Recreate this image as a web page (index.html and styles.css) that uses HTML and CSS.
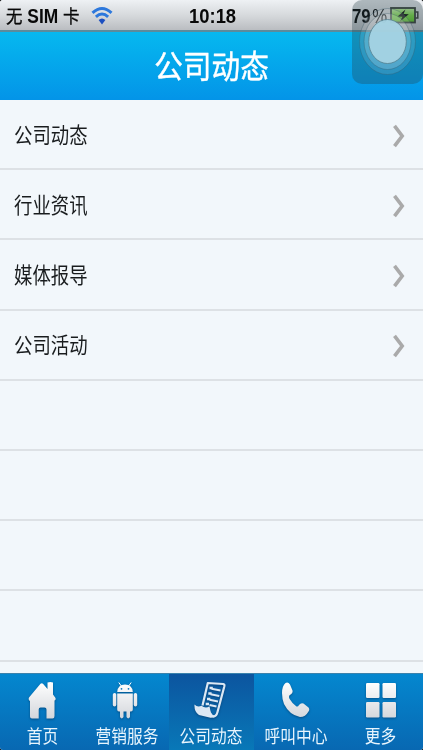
FILE: index.html
```html
<!DOCTYPE html>
<html lang="zh-CN">
<head>
  <meta charset="UTF-8" />
  <meta name="viewport" content="width=device-width, initial-scale=1" />
  <title>公司动态</title>
  <link rel="stylesheet" href="styles.css">
</head>
<body>
  <div class="app">
    <!-- Status bar -->
    <div class="status">
      <div class="carrier">
        <span class="carrier-text"><span class="han">无</span> SIM <span class="han">卡</span></span>
        <svg class="wifi" width="22" height="19" viewBox="0 0 22 19">
          <g fill="none" stroke="#2d78dc" stroke-width="3">
            <path d="M1.500 6.800Q11 -1.800 20.500 6.800" />
            <path d="M4.900 10.800Q11 5.200 17.100 10.800" />
          </g>
          <path d="M7.600 14Q11 11 14.400 14L11 18.500Z" fill="#1c4fc0" />
        </svg>
      </div>
      <span class="clock">10:18</span>
      <div class="power">
        <span class="percent">79<span class="sign">%</span></span>
        <svg class="battery" width="29" height="17" viewBox="0 0 29 17">
          <defs>
            <linearGradient id="charge" x1="0" y1="0" x2="0" y2="1">
              <stop offset="0" stop-color="#c8f5a8" />
              <stop offset="0.5" stop-color="#7fe048" />
              <stop offset="1" stop-color="#5fc42a" />
            </linearGradient>
          </defs>
          <rect x="1" y="1" width="24" height="14.500" fill="url(#charge)" stroke="#3c423c" stroke-width="1.800" />
          <path d="M25.500 5h2.300v6h-2.300" fill="none" stroke="#3c423c" stroke-width="1.500" />
          <path d="M15.500 2.500L7.500 9.500l5 .2L10 14.500l8.800-7.200-5.300-.3Z" fill="#151a12" />
        </svg>
      </div>
    </div>

    <header class="header">
      <h1>公司动态</h1>
    </header>

    <ul class="list">
      <li><span class="name">公司动态</span><svg class="arrow" width="12" height="24" viewBox="0 0 12 24"><path d="M1.500 1.800L9.200 12L1.500 22.200" /></svg></li>
      <li><span class="name">行业资讯</span><svg class="arrow" width="12" height="24" viewBox="0 0 12 24"><path d="M1.500 1.800L9.200 12L1.500 22.200" /></svg></li>
      <li><span class="name">媒体报导</span><svg class="arrow" width="12" height="24" viewBox="0 0 12 24"><path d="M1.500 1.800L9.200 12L1.500 22.200" /></svg></li>
      <li><span class="name">公司活动</span><svg class="arrow" width="12" height="24" viewBox="0 0 12 24"><path d="M1.500 1.800L9.200 12L1.500 22.200" /></svg></li>
      <li></li>
      <li></li>
      <li></li>
      <li></li>
    </ul>

    <!-- Bottom tabs -->
    <nav class="tabs">
      <a class="tab">
        <svg class="icon" width="40" height="42" viewBox="0 0 40 42">
          <defs>
            <linearGradient id="silver" gradientUnits="userSpaceOnUse" x1="0" y1="2" x2="0" y2="40">
              <stop offset="0" stop-color="#ffffff" />
              <stop offset="1" stop-color="#d2d5da" />
            </linearGradient>
          </defs>
          <path fill="url(#silver)" d="M18.500 3.800Q19.800 2.500 21 3.800L25.500 9V2.500Q28.500 1.500 31 2.500V14.500L33.500 18Q34 20 32.500 20.500V36Q32.500 38.500 30.500 38.500H24.500V29.500Q24.500 27.500 22.500 27.500H18.500Q16.700 27.500 16.700 29.500V38.500H10Q8 38.500 8 36.500V21Q6 20 7 17.500Z" />
        </svg>
        <span class="label">首页</span>
      </a>
      <a class="tab">
        <svg class="icon" width="40" height="42" viewBox="0 0 40 42">
          <path d="M11.800 2.500L15 7M24.200 2.500L21 7" stroke="#fff" stroke-width="1" />
          <path fill="url(#silver)" d="M10.200 12Q10.700 4.500 18 4.500T25.800 12Z" />
          <path fill="url(#silver)" d="M10.200 13.500H25.800V29.500Q25.800 31.500 24 31.500H23V37Q21.200 39.800 19.500 37V31.500H16.500V37Q14.700 39.800 13 37V31.500H12Q10.200 31.500 10.200 29.500Z" />
          <rect fill="url(#silver)" x="5.800" y="13" width="3.500" height="13.500" rx="1.700" />
          <rect fill="url(#silver)" x="26.700" y="13" width="3.500" height="13.500" rx="1.700" />
          <circle cx="14.500" cy="8.800" r="0.900" fill="#0876bd" />
          <circle cx="21.500" cy="8.800" r="0.900" fill="#0876bd" />
        </svg>
        <span class="label">营销服务</span>
      </a>
      <a class="tab active">
        <svg class="icon" width="40" height="42" viewBox="0 0 40 42">
          <path fill="none" stroke="#dce8f4" stroke-width="2.200" stroke-linejoin="round" d="M11.500 25.500L16.800 3L32.300 4Q33.800 4.300 33.300 6.500L26.500 32Q25.200 37 21.500 36.500" />
          <path fill="#dce8f4" d="M3.500 24.500Q6.500 27.800 10.500 25.800Q14.500 29 18.500 26.300Q19.200 30.500 20 32.500Q21 35.200 24 35.500Q22.500 38.200 19.500 37.800L8 35Q3 32 3.500 24.500Z" />
          <path d="M18.500 8h3.300M17.300 13.500h3.300M16 19h3.300M14.700 24h3.300" stroke="#dce8f4" stroke-width="2.500" />
          <path d="M20.500 8.800L29.500 10.500M19.500 14.300L28.300 16M18.500 19.800L27 21.500M18.500 25L25.500 26.500" stroke="#dce8f4" stroke-width="2.100" />
        </svg>
        <span class="label">公司动态</span>
      </a>
      <a class="tab">
        <svg class="icon" width="40" height="42" viewBox="0 0 40 42">
          <path fill="url(#silver)" d="M9.500 3Q12 1.500 14 4.500L16.500 10.500Q17 13 15 14.200Q12 15.500 13.500 18.800Q16.500 24 20.500 26.500Q22 27 23 25Q25 22.300 27.500 23.500L32.500 27.500Q34 29.500 32.500 31.500Q29.500 37 24 37Q13.500 35 8 24Q6 18.500 6 13Q6 6 9.500 3Z" />
        </svg>
        <span class="label">呼叫中心</span>
      </a>
      <a class="tab">
        <svg class="icon" width="40" height="42" viewBox="0 0 40 42">
          <g fill="url(#silver)">
            <rect x="5" y="3" width="13.500" height="15" rx="1.200" />
            <rect x="21.500" y="3" width="13.500" height="15" rx="1.200" />
            <rect x="5" y="22" width="13.500" height="15.500" rx="1.200" />
            <rect x="21.500" y="22" width="13.500" height="15.500" rx="1.200" />
          </g>
        </svg>
        <span class="label">更多</span>
      </a>
    </nav>

    <!-- Floating touch button -->
    <div class="touch">
      <svg width="71" height="84" viewBox="0 0 71 84">
        <g fill="#fff" stroke="#3a5866" stroke-opacity="0.350">
          <ellipse cx="35.500" cy="41.500" rx="28" ry="33" fill-opacity="0.120" />
          <ellipse cx="35.500" cy="41.500" rx="23.500" ry="28" fill-opacity="0.180" />
        </g>
        <ellipse cx="35.500" cy="41.500" rx="18.800" ry="22" fill="#a5d3e3" fill-opacity="0.950" stroke="#56808f" stroke-width="0.800" />
      </svg>
    </div>
  </div>
</body>
</html>
```
FILE: styles.css
```css
body {
  margin: 0;
  background: #000;
  font-family: "Liberation Sans", "Noto Sans CJK SC", sans-serif;
}
.app {
  position: relative;
  display: flex;
  flex-direction: column;
  width: 423px;
  height: 750px;
  overflow: hidden;
  border-radius: 3px;
  background: #f2f7fb;
}
/* Status bar */
.status {
  display: grid;
  grid-template-columns: 1fr auto 1fr;
  align-items: center;
  box-sizing: border-box;
  height: 32px;
  padding: 0 4px 0 6px;
  border-bottom: 2px solid #5c8b9b;
  background: linear-gradient(#eef1f4, #d4d7da 55%, #babdc1);
  color: #080808;
  font-size: 20px;
  font-weight: bold;
  line-height: 30px;
  white-space: nowrap;
}
.carrier {
  display: flex;
  align-items: center;
}
.carrier-text {
  width: 85px;
  font-size: 19.500px;
  transform: scaleX(0.89);
  transform-origin: left;
}
.han {
  font-family: "Noto Sans CJK SC", sans-serif;
  font-size: 18.500px;
  font-weight: normal;
  -webkit-text-stroke: 0.3px #080808;
}
.clock {
  transform: scaleX(0.92);
}
.power {
  display: flex;
  justify-content: flex-end;
  align-items: center;
}
.percent {
  width: 38px;
  transform: scaleX(0.84);
  transform-origin: left;
}
.sign {
  margin-left: 2px;
  font-weight: normal;
}
/* Title bar */
.header {
  height: 68px;
  background: linear-gradient(#06b8ef, #0394e8);
}
h1 {
  margin: 0;
  color: #fff;
  font-size: 32px;
  font-weight: normal;
  line-height: 71px;
  text-align: center;
  transform: scaleX(0.895);
  -webkit-text-stroke: 0.4px #fff;
}
/* News categories */
.list {
  flex: 1;
  min-height: 0;
  margin: 0;
  padding: 0;
  list-style: none;
}
.list li {
  display: flex;
  align-items: center;
  justify-content: space-between;
  box-sizing: border-box;
  height: 70.200px;
  padding: 3px 18px 0 14px;
  border-bottom: 2px solid #dde1e5;
}
.name {
  color: #191c1e;
  font-size: 21.500px;
  line-height: 32px;
  transform: scaleX(0.855);
  transform-origin: left;
}
.arrow {
  fill: none;
  stroke: #aaa;
  stroke-width: 3.600;
}
/* Bottom tabs */
.tabs {
  display: flex;
  height: 76px;
  border-top: 1px solid #3a82ac;
  background: linear-gradient(#0487cf, #0868b2);
}
.tab {
  display: flex;
  flex: 1 0 0;
  flex-direction: column;
  align-items: center;
  box-sizing: border-box;
  min-width: 0;
  padding-top: 6px;
  color: #e8f5fd;
}
.tab.active {
  background: linear-gradient(#0c559f, #0878b8);
}
.icon {
  flex: none;
  filter: drop-shadow(0 1px 1px rgba(0, 40, 80, 0.5));
}
.label {
  font-size: 18.500px;
  line-height: 30px;
  white-space: nowrap;
  transform: scaleX(0.85);
}
/* Floating button sits over both bars */
.touch {
  position: absolute;
  top: 0;
  right: 0;
  width: 71px;
  height: 84px;
  border-radius: 10px;
  background: rgba(40, 65, 75, 0.32);
}
```
